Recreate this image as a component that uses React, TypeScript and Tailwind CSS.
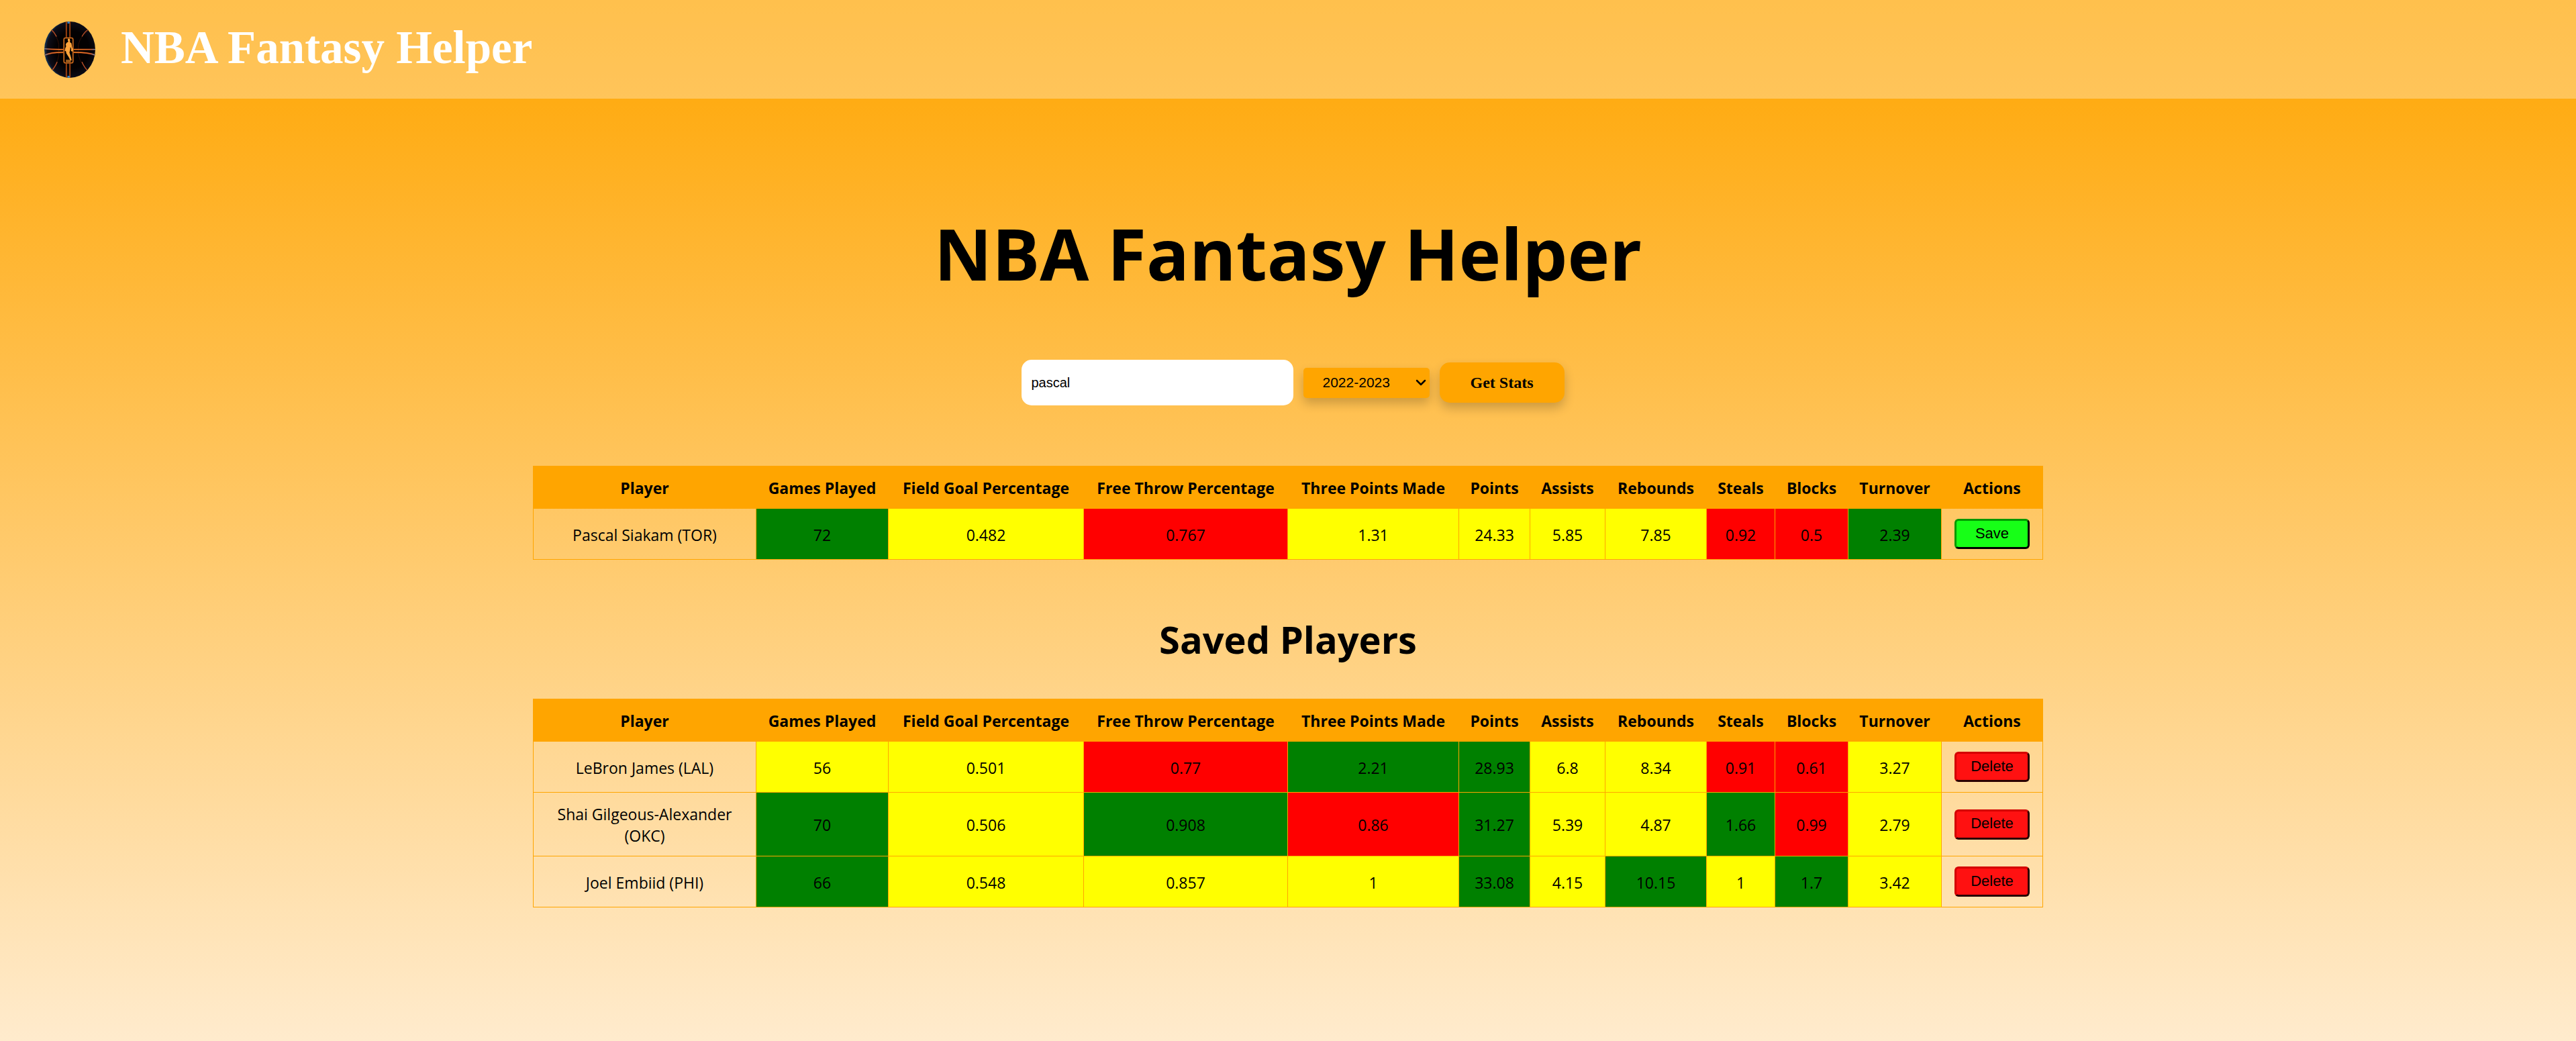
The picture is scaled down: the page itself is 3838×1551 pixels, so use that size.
import { useState } from "react";
import { ChevronDown } from "lucide-react";

type Rating = "g" | "y" | "r";
type Stat = [value: string, rating: Rating];

interface Player {
  name: string;
  stats: Stat[];
}

const columns = [
  { label: "Player", width: "w-[332px]" },
  { label: "Games Played", width: "w-[197px]" },
  { label: "Field Goal Percentage", width: "w-[291px]" },
  { label: "Free Throw Percentage", width: "w-[304px]" },
  { label: "Three Points Made", width: "w-[255px]" },
  { label: "Points", width: "w-[106px]" },
  { label: "Assists", width: "w-[112px]" },
  { label: "Rebounds", width: "w-[151px]" },
  { label: "Steals", width: "w-[102px]" },
  { label: "Blocks", width: "w-[109px]" },
  { label: "Turnover", width: "w-[139px]" },
  { label: "Actions", width: "w-[151px]" },
];

const ratingColors: Record<Rating, string> = {
  g: "bg-[#008000]",
  y: "bg-[#ffff00]",
  r: "bg-[#ff0000]",
};

const searchResults: Player[] = [
  {
    name: "Pascal Siakam (TOR)",
    stats: [["72", "g"], ["0.482", "y"], ["0.767", "r"], ["1.31", "y"], ["24.33", "y"], ["5.85", "y"], ["7.85", "y"], ["0.92", "r"], ["0.5", "r"], ["2.39", "g"]],
  },
];

const savedPlayers: Player[] = [
  {
    name: "LeBron James (LAL)",
    stats: [["56", "y"], ["0.501", "y"], ["0.77", "r"], ["2.21", "g"], ["28.93", "g"], ["6.8", "y"], ["8.34", "y"], ["0.91", "r"], ["0.61", "r"], ["3.27", "y"]],
  },
  {
    name: "Shai Gilgeous-Alexander (OKC)",
    stats: [["70", "g"], ["0.506", "y"], ["0.908", "g"], ["0.86", "r"], ["31.27", "g"], ["5.39", "y"], ["4.87", "y"], ["1.66", "g"], ["0.99", "r"], ["2.79", "y"]],
  },
  {
    name: "Joel Embiid (PHI)",
    stats: [["66", "g"], ["0.548", "y"], ["0.857", "y"], ["1", "y"], ["33.08", "g"], ["4.15", "y"], ["10.15", "g"], ["1", "y"], ["1.7", "g"], ["3.42", "y"]],
  },
];

function Logo() {
  return (
    <svg viewBox="20 33 229 250" preserveAspectRatio="none" className="h-[84px] w-[76px]" role="img" aria-label="Basketball logo">
      <defs>
        <clipPath id="ball">
          <ellipse cx="134.500" cy="158" rx="114.500" ry="125" />
        </clipPath>
        <radialGradient id="shade" cx="0.55" cy="0.5" r="0.55">
          <stop offset="0.6" stopColor="#030102" />
          <stop offset="0.9" stopColor="#0d0d18" />
          <stop offset="1" stopColor="#15395f" />
        </radialGradient>
        <linearGradient id="seam" x1="20" x2="249" y1="0" y2="0" gradientUnits="userSpaceOnUse">
          <stop offset="0" stopColor="#4d8fd0" />
          <stop offset="0.12" stopColor="#d9662f" />
          <stop offset="0.5" stopColor="#ff8a1c" />
          <stop offset="0.9" stopColor="#d9662f" />
          <stop offset="1" stopColor="#4d8fd0" />
        </linearGradient>
      </defs>
      <g clipPath="url(#ball)" fill="none">
        <rect x="20" y="33" width="229" height="250" fill="url(#shade)" />
        <path d="M50 72Q92 112 85 158Q92 204 50 252M218 72Q166 112 173 158Q166 204 218 252" stroke="#4a1808" strokeWidth="2" />
        <path d="M50 68Q67 82 75 100M218 68Q198 82 189 100M50 254Q67 238 78 212M218 254Q200 238 189 212" stroke="#b9502a" strokeWidth="4" />
        <path d="M119 33V106M135 33V106M119 216V283M135 216V283" stroke="#6b2407" strokeWidth="6" />
        <path d="M119 33V106M135 33V106M119 216V283M135 216V283" stroke="#e87322" strokeWidth="2" />
        <path d="M20 154Q60 158 108 157M148 157H249M20 183Q50 169 108 170M148 170Q215 169 249 182" stroke="#6b2407" strokeWidth="7" />
        <path d="M20 154Q60 158 108 157M148 157H249M20 183Q50 169 108 170M148 170Q215 169 249 182" stroke="url(#seam)" strokeWidth="4" />
        <path d="M124 33H134V42H124ZM124 274H134V283H124Z" fill="#3484cc" />
        <rect x="108" y="106" width="41" height="111" rx="7" fill="#050201" stroke="#8a3908" strokeWidth="6" />
        <rect x="108" y="106" width="41" height="111" rx="7" stroke="#ffa03a" strokeWidth="2" />
        <path d="M127 109L134 110L136 120L134 124L142 130L145 148L150 158L145 167L140 163L141 154L137 145L136 158L133 171L139 189L143 204L138 207L129 190L119 174L117 165L112 163L114 151L118 143L116 134L121 127L128 123L125 115Z" fill="#ffa53c" />
        <path d="M117 205H138M117 211H138" stroke="#e88a2e" strokeWidth="3" />
        <path d="M120 203V213M126 203V213M132 203V213M137 203V213" stroke="#e88a2e" strokeWidth="2" />
      </g>
    </svg>
  );
}

interface PlayerTableProps {
  caption: string;
  players: Player[];
  action: "Save" | "Delete";
}

const actionColors = {
  Save: "bg-[#17ff17] border-t-[#009900] border-l-[#009900] border-r-black border-b-black",
  Delete: "bg-[#ff1111] border-t-[#d40000] border-l-[#d40000] border-r-[#2a0000] border-b-[#2a0000]",
};

function PlayerTable({ caption, players, action }: PlayerTableProps) {
  return (
    <table aria-label={caption} className="mx-auto table-fixed border-collapse text-center text-[23px] leading-[32px]">
      <colgroup>
        {columns.map((column) => (
          <col key={column.label} className={column.width} />
        ))}
      </colgroup>
      <thead>
        <tr className="h-[63px] bg-[#ffa500]">
          {columns.map((column) => (
            <th key={column.label} scope="col" className="border border-[#ffa500] pt-0.5 font-bold whitespace-nowrap">
              {column.label}
            </th>
          ))}
        </tr>
      </thead>
      <tbody>
        {players.map((player) => (
          <tr key={player.name} className="h-[76px]">
            <td className="border border-[#ffa500] px-5 pt-4 pb-3.5">{player.name}</td>
            {player.stats.map(([value, rating], index) => (
              <td key={columns[index + 1].label} className={`border border-[#ffa500] pt-0.5 ${ratingColors[rating]}`}>
                {value}
              </td>
            ))}
            <td className="border border-[#ffa500]">
              <button
                type="button"
                aria-label={`${action} ${player.name}`}
                className={`mx-auto block h-[45px] w-28 rounded-md border-3 pb-0.5 font-['Liberation_Sans',Arial,sans-serif] text-[22px] leading-[32px] ${actionColors[action]}`}
              >
                {action}
              </button>
            </td>
          </tr>
        ))}
      </tbody>
    </table>
  );
}

export default function App() {
  const [query, setQuery] = useState("pascal");
  const [season, setSeason] = useState("2022-2023");

  return (
    <div className="min-h-screen bg-[linear-gradient(to_bottom,#ffa500,#ffebcd)] font-['Open_Sans','Noto_Sans',sans-serif] text-black">
      <header className="flex h-[147px] items-center gap-[38px] bg-white/30 px-[66px]">
        <Logo />
        <span className="pb-1 font-['Liberation_Serif',serif] text-[69px] leading-none font-bold text-white">NBA Fantasy Helper</span>
      </header>

      <main className="flex flex-col items-center">
        <h1 className="mt-[155px] text-[106px] leading-[150px] font-bold">NBA Fantasy Helper</h1>

        <form className="mt-[84px] ml-3.5 flex items-center gap-[15px]" onSubmit={(event) => event.preventDefault()}>
          <input
            type="text"
            aria-label="Player name"
            value={query}
            onChange={(event) => setQuery(event.target.value)}
            className="h-[68px] w-[405px] rounded-[15px] bg-white px-[15px] font-['Liberation_Sans',Arial,sans-serif] text-[20px] outline-none"
          />
          <div className="relative">
            <select
              aria-label="Season"
              value={season}
              onChange={(event) => setSeason(event.target.value)}
              className="block h-[45px] w-[188px] appearance-none rounded-[5px] bg-[#ffa500] pl-[29px] font-['Liberation_Sans',Arial,sans-serif] text-[21px] shadow-[0_8px_16px_rgba(0,0,0,0.2)]"
            >
              <option>2022-2023</option>
              <option>2021-2022</option>
            </select>
            <ChevronDown aria-hidden className="pointer-events-none absolute inset-y-0 right-px my-auto size-6" strokeWidth={2.5} />
          </div>
          <button
            type="submit"
            className="h-[60px] w-[186px] rounded-[15px] bg-[#ffa500] font-['Liberation_Serif',serif] text-[24px] font-bold shadow-[0_8px_16px_rgba(0,0,0,0.2)]"
          >
            Get Stats
          </button>
        </form>

        <section className="mt-[90px]">
          <PlayerTable caption="Search results" players={searchResults} action="Save" />
        </section>

        <section className="mt-[78px] mb-[100px]">
          <h2 className="mb-[49px] text-center text-[56px] leading-[80px] font-bold">Saved Players</h2>
          <PlayerTable caption="Saved players" players={savedPlayers} action="Delete" />
        </section>
      </main>
    </div>
  );
}
